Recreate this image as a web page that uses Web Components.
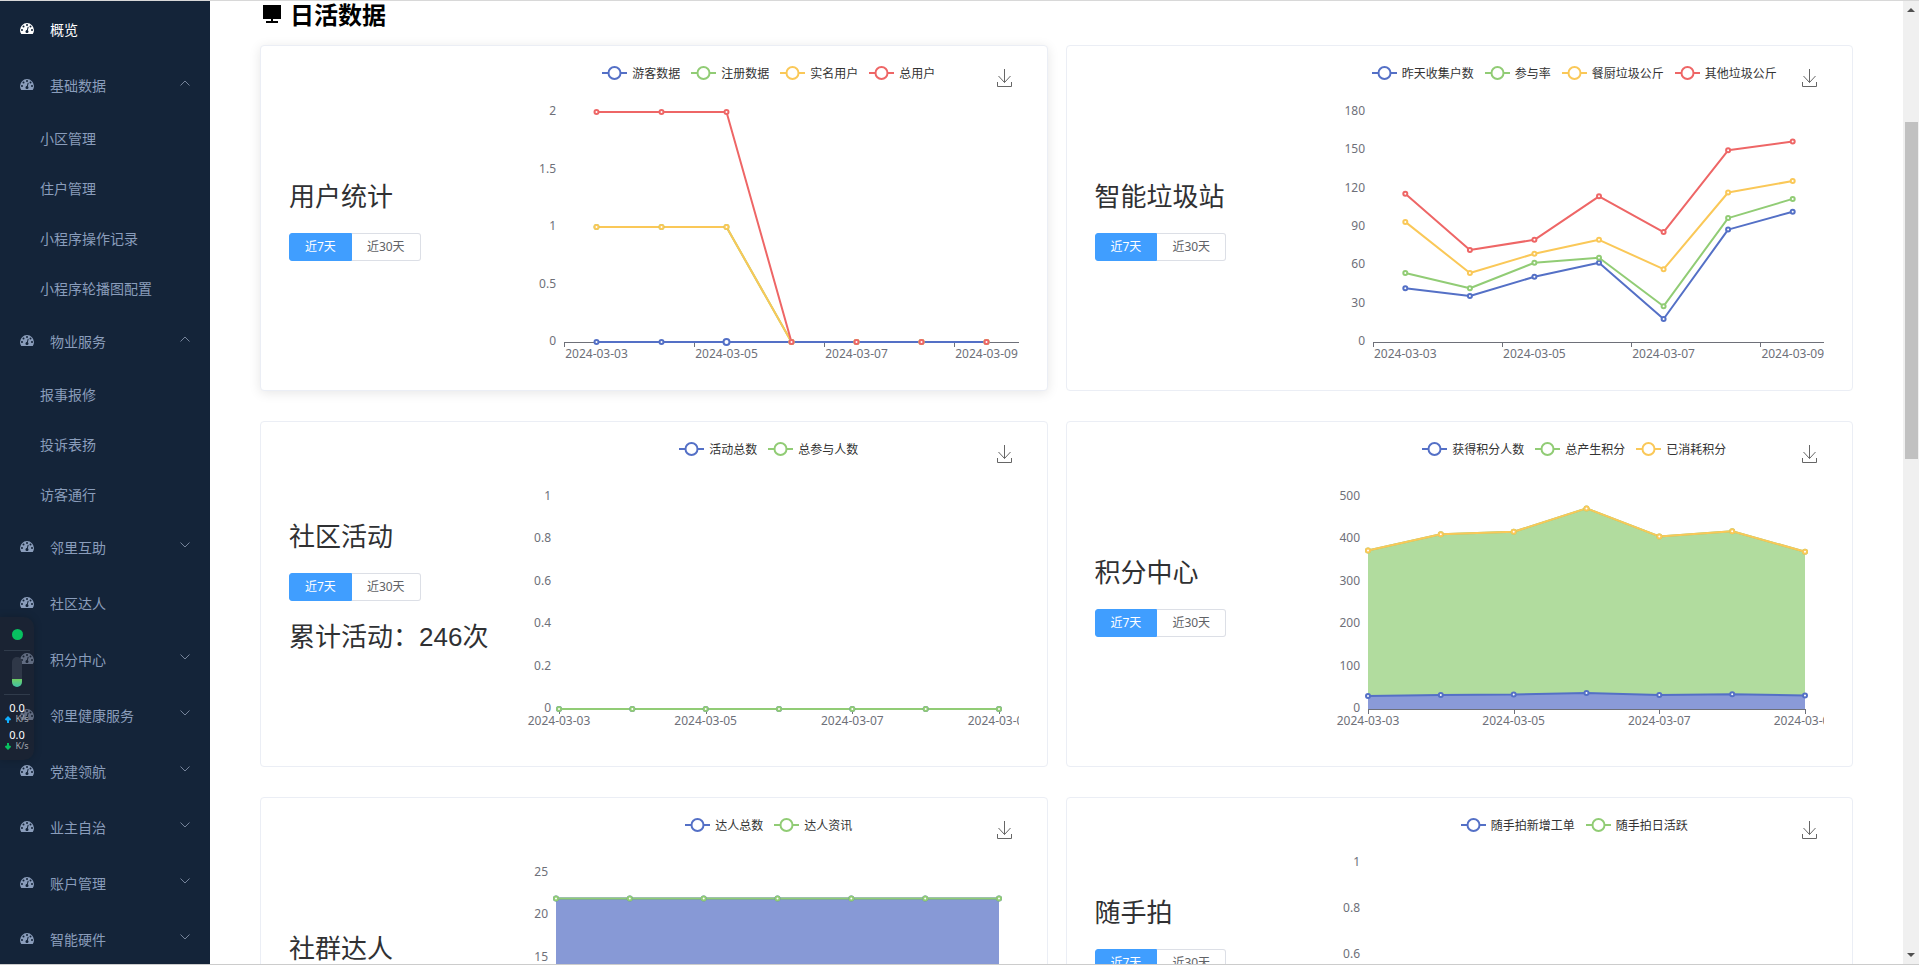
<!DOCTYPE html>
<html lang="zh-CN">
<head>
<meta charset="utf-8">
<title>概览</title>
<style>
  html, body { margin: 0; height: 100%; }
  body { background: #fff; overflow: hidden; font-family: "Noto Sans CJK SC", sans-serif; }
</style>
</head>
<body>
<admin-app></admin-app>

<script>
const define = (name, html, setup) => {
  const template = document.createElement('template');
  template.innerHTML = html;
  customElements.define(name, class extends HTMLElement {
    connectedCallback() {
      if (this.shadowRoot) return;
      this.attachShadow({ mode: 'open' }).append(template.content.cloneNode(true));
      if (setup) setup(this, this.shadowRoot);
    }
  });
};

/* ---------- icons ---------- */
define('gauge-icon', `
  <style>
    :host { display: block; width: 14px; height: 14px; }
    svg { display: block; width: 100%; height: 100%; fill: currentColor; }
  </style>
  <svg viewBox="0 0 128 128" aria-hidden="true"><g transform="translate(0 10)"><path fill-rule="evenodd" d="M128 63.6c0 12.4-3.4 23.9-10.1 34.5-.9 1.3-2.2 2-3.9 2H13.9c-1.7 0-3-.7-3.9-2C3.400 87.600 0 76.100 0 63.600a64 63.600 0 0 1 128 0z
    M9.100 63.600a9.100 9.100 0 1 0 18.300 0a9.100 9.100 0 1 0-18.300 0z
    M22.900 31.800a9.100 9.100 0 1 0 18.300 0a9.100 9.100 0 1 0-18.300 0z
    M54.900 18.200a9.100 9.100 0 1 0 18.300 0a9.100 9.100 0 1 0-18.300 0z
    M86.900 31.800a9.100 9.100 0 1 0 18.300 0a9.100 9.100 0 1 0-18.300 0z
    M100.600 63.600a9.100 9.100 0 1 0 18.300 0a9.100 9.100 0 1 0-18.300 0z
    M71.700 66l7.200-27.100c.7-2.500-.8-4.900-3.300-5.600-2.400-.6-4.900.8-5.600 3.300l-7.200 27.100c-5.700.5-10.600 4.400-12.100 10.100-1.900 7.300 2.500 14.700 9.800 16.600 7.300 1.900 14.900-2.400 16.800-9.700 1.500-5.700-.8-11.500-5.600-14.700z"/></g></svg>`);

define('chevron-icon', `
  <style>
    :host { display: block; width: 10px; height: 6px; color: #75839a; }
    svg { display: block; width: 100%; height: 100%; fill: none; stroke: currentColor; }
    :host([up]) svg { transform: scaleY(-1); }
  </style>
  <svg viewBox="0 0 10 6" aria-hidden="true"><path d="M.5.500 5 5 9.500.5"/></svg>`);

/* ---------- sidebar ---------- */
define('side-item', `
  <style>
    :host { display: block; height: 56px; color: #8a9dbb; font-size: 14px; }
    :host([active]) { color: #fff; }
    :host([sub]) { height: 50px; }
    .row { all: unset; box-sizing: border-box; display: flex; align-items: center; width: 100%; height: 100%;
           padding: 0 20px; cursor: pointer; }
    .row span { margin-left: 16px; flex: 1; white-space: nowrap; }
    :host([sub]) .row { padding-left: 40px; }
    :host([sub]) .row span { margin-left: 0; }
    chevron-icon { margin-bottom: 4px; flex: none; }
  </style>`, (host, root) => {
  const group = host.hasAttribute('group');
  const row = document.createElement(group ? 'button' : 'a');
  row.className = 'row';
  if (group) {
    row.type = 'button';
    row.setAttribute('aria-expanded', host.getAttribute('group') === 'open');
  } else row.href = '#';
  row.innerHTML = `${host.hasAttribute('sub') ? '' : '<gauge-icon></gauge-icon>'}<span><slot></slot></span>` +
    (group ? `<chevron-icon ${host.getAttribute('group') === 'open' ? 'up' : ''}></chevron-icon>` : '');
  root.append(row);
});

define('side-nav', `
  <style>
    :host { display: block; background: #142439; overflow: hidden; }
  </style>
  <nav>
    <side-item active>概览</side-item>
    <side-item group="open">基础数据</side-item>
    <side-item sub>小区管理</side-item>
    <side-item sub>住户管理</side-item>
    <side-item sub>小程序操作记录</side-item>
    <side-item sub>小程序轮播图配置</side-item>
    <side-item group="open">物业服务</side-item>
    <side-item sub>报事报修</side-item>
    <side-item sub>投诉表扬</side-item>
    <side-item sub>访客通行</side-item>
    <side-item group>邻里互助</side-item>
    <side-item>社区达人</side-item>
    <side-item group>积分中心</side-item>
    <side-item group>邻里健康服务</side-item>
    <side-item group>党建领航</side-item>
    <side-item group>业主自治</side-item>
    <side-item group>账户管理</side-item>
    <side-item group>智能硬件</side-item>
  </nav>`);

/* ---------- floating network monitor ---------- */
define('net-monitor', `
  <style>
    :host { display: flex; flex-direction: column; align-items: center; box-sizing: border-box; width: 34px; height: 143px;
            padding: 12px 4px 0; border-radius: 0 10px 10px 0; background: rgba(34, 36, 42, .4);
            box-shadow: 0 0 8px rgba(0, 0, 0, .2); color: #fff; font: 11px/14px "Noto Sans", sans-serif; }
    .dot { width: 11px; height: 11px; border-radius: 50%; background: #07c160; flex: none; }
    hr { width: 26px; height: 1px; margin: 10px 0 6px; border: 0; background: #303b4b; flex: none; }
    .tube { width: 10px; height: 30px; border-radius: 5px; flex: none;
            background: linear-gradient(#2f3848 22px, #6fce63 22px, #3fc0a8); }
    .tube + hr { margin: 7px 0 6px; }
    .rate { display: block; line-height: 14px; }
    .unit { display: flex; align-items: center; gap: 4px; font-size: 9px; line-height: 8px; margin-bottom: 5px; color: #a4a8b0; }
    svg { width: 6px; height: 7px; fill: none; stroke: currentColor; stroke-width: 2; }
    .up { color: #10aeff; } .down { color: #07c160; transform: rotate(180deg); }
  </style>
  <span class="dot"></span><hr><span class="tube"></span><hr>
  <span class="rate">0.0</span>
  <span class="unit"><svg class="up" viewBox="0 0 6 7"><path d="M3 7V1M.5 4 3 1.500 5.500 4"/></svg>K/s</span>
  <span class="rate">0.0</span>
  <span class="unit"><svg class="down" viewBox="0 0 6 7"><path d="M3 7V1M.5 4 3 1.500 5.500 4"/></svg>K/s</span>`);

/* ---------- scroll rail ---------- */
define('scroll-rail', `
  <style>
    :host { display: grid; grid-template-rows: 121fr 337fr 504fr; background: #f0f0f0; justify-items: center; }
    .thumb { width: 13px; background: #c1c1c1; }
    svg { width: 8px; height: 4px; fill: #505050; display: block; margin: 7px 0; }
    .bottom { align-self: end; }
  </style>
  <svg viewBox="0 0 8 4"><path d="M0 4 4 0l4 4z"/></svg>
  <div class="thumb"></div>
  <svg class="bottom" viewBox="0 0 8 4"><path d="M0 0h8L4 4z"/></svg>`);

/* ---------- charts ---------- */
const COLORS = ['#5470c6', '#91cc75', '#fac858', '#ee6666'];
const DATES = ['2024-03-03', '2024-03-04', '2024-03-05', '2024-03-06', '2024-03-07', '2024-03-08', '2024-03-09'];
const CHARTS = {
  users: { left: 45, right: 0, top: 51, bottom: 281, band: true, ticks: [0, 0.5, 1, 1.5, 2], front: 0, focus: [0, 2],
    series: [['游客数据', [0, 0, 0, 0, 0, 0, 0]], ['注册数据', [1, 1, 1, 0, 0, 0, 0]],
             ['实名用户', [1, 1, 1, 0, 0, 0, 0]], ['总用户', [2, 2, 2, 0, 0, 0, 0]]] },
  garbage: { left: 48, right: 0, top: 51, bottom: 281, band: true, ticks: [0, 30, 60, 90, 120, 150, 180],
    series: [['昨天收集户数', [42, 36, 51, 62, 18, 88, 102]], ['参与率', [54, 42, 62, 66, 28, 97, 112]],
             ['餐厨垃圾公斤', [94, 54, 69, 80, 57, 117, 126]], ['其他垃圾公斤', [116, 72, 80, 114, 86, 150, 157]]] },
  activity: { left: 40, right: 20, top: 60, bottom: 272, ticks: [0, 0.2, 0.4, 0.6, 0.8, 1],
    series: [['活动总数', [0, 0, 0, 0, 0, 0, 0]], ['总参与人数', [0, 0, 0, 0, 0, 0, 0]]] },
  points: { left: 43, right: 20, top: 60, bottom: 272, ticks: [0, 100, 200, 300, 400, 500], area: ['#8a9ad8', '#b1dc9e'],
    series: [['获得积分人数', [31, 33, 34, 38, 33, 35, 32]], ['总产生积分', [374, 412, 418, 473, 407, 419, 371]],
             ['已消耗积分', [374, 412, 418, 473, 407, 419, 371]]] },
  talent: { left: 37, right: 20, top: 60, bottom: 272, ticks: [0, 5, 10, 15, 20, 25], area: ['#8799d6'],
    series: [['达人总数', [22, 22, 22, 22, 22, 22, 22]], ['达人资讯', [22, 22, 22, 22, 22, 22, 22]]] },
  snap: { left: 43, right: 0, top: 50, bottom: 281, band: true, ticks: [0, 0.2, 0.4, 0.6, 0.8, 1],
    series: [['随手拍新增工单', [0, 0, 0, 0, 0, 0, 0]], ['随手拍日活跃', [0, 0, 0, 0, 0, 0, 0]]] }
};
const LEGEND_HEIGHT = 24;

function plot(c, width) {
  const x0 = c.left, x1 = width - c.right, y0 = c.bottom - LEGEND_HEIGHT, y1 = c.top - LEGEND_HEIGHT;
  const n = DATES.length, step = (x1 - x0) / (c.band ? n : n - 1);
  const X = i => x0 + step * (c.band ? i + .5 : i);
  const max = c.ticks[c.ticks.length - 1];
  const Y = v => y0 - (y0 - y1) * v / max;
  const pts = d => d.map((v, i) => `${X(i).toFixed(1)},${Y(v).toFixed(1)}`);
  const snap = v => Math.round(v) + .5;
  let out = '';
  (c.area || []).forEach((fill, s) => {
    const base = s ? pts(c.series[s - 1][1]).reverse() : [`${x1},${y0}`, `${x0},${y0}`];
    out += `<polygon fill="${fill}" points="${pts(c.series[s][1]).concat(base).join(' ')}"/>`;
  });
  out += `<path class="axis" d="M${x0} ${y0 + .5}H${x1}` +
    DATES.map((_, i) => i % 2 ? '' : `M${snap(x0 + step * i)} ${y0}v5`).join('') + '"/>';
  c.ticks.forEach(t => out += `<text text-anchor="end" x="${x0 - 8}" y="${Math.round(Y(t)) + 3}">${t}</text>`);
  DATES.forEach((d, i) => { if (i % 2 === 0) out += `<text text-anchor="middle" x="${X(i)}" y="${y0 + 16}">${d}</text>`; });
  const order = c.series.map((_, i) => i);
  if (c.front !== undefined) order.push(...order.splice(c.front, 1));
  order.forEach(s => out += `<polyline stroke="${COLORS[s]}" points="${pts(c.series[s][1]).join(' ')}"/>`);
  c.series.forEach(([, d], s) => d.forEach((v, i) => {
    const big = c.focus && c.focus[0] === s && c.focus[1] === i;
    out += `<circle stroke="${COLORS[s]}" cx="${X(i).toFixed(1)}" cy="${Y(v).toFixed(1)}" r="${big ? 3 : 2}"/>`;
  }));
  return out;
}

define('line-chart', `
  <style>
    :host { display: block; position: relative; min-width: 0; }
    .legend { display: flex; justify-content: center; gap: 11px; height: 24px; align-items: center; }
    .legend button { all: unset; display: flex; align-items: center; gap: 5px; font-size: 12px; line-height: 14px;
                     color: #333; white-space: nowrap; cursor: pointer; }
    .legend svg { width: 25px; height: 14px; fill: #fff; stroke-width: 2; }
    .save { all: unset; position: absolute; right: 7px; top: 8px; width: 15px; height: 18px; cursor: pointer; }
    .save svg { display: block; width: 15px; height: 18px; fill: none; stroke: #666; }
    .plot { display: block; width: 100%; height: 276px; overflow: hidden; }
    .plot text { fill: #6e7079; font: 12px "Noto Sans", sans-serif; }
    .plot .axis { stroke: #6e7079; fill: none; }
    .plot polyline { fill: none; stroke-width: 2; stroke-linejoin: bevel; }
    .plot circle { fill: #fff; stroke-width: 2; }
  </style>
  <div class="legend"></div>
  <svg class="plot" role="img"></svg>
  <button class="save" type="button" aria-label="保存为图片"><svg viewBox="0 0 15 18"><path d="M1.500 7 7.500 13.500 13.500 7M.5 13v4.500h14V13M7.500 13.500V0"/></svg></button>`,
(host, root) => {
  const c = CHARTS[host.getAttribute('data')];
  root.querySelector('.legend').innerHTML = c.series.map(([name], i) =>
    `<button type="button"><svg viewBox="0 0 25 14" stroke="${COLORS[i]}" aria-hidden="true"><path d="M0 7h25"/><circle cx="12.5" cy="7" r="6"/></svg>${name}</button>`).join('');
  const svg = root.querySelector('.plot');
  const draw = () => { svg.innerHTML = plot(c, host.clientWidth); };
  draw();
  new ResizeObserver(draw).observe(host);
});

define('range-switch', `
  <style>
    :host { display: flex; }
    button { box-sizing: border-box; height: 28px; padding: 0 15px; margin: 0; font: 12px/12px "Noto Sans", "Noto Sans CJK SC", sans-serif;
             border: 1px solid #dcdfe6; background: #fff; color: #606266; white-space: nowrap; cursor: pointer; }
    .on { border-color: #409eff; background: #409eff; color: #fff; border-radius: 3px 0 0 3px; }
    .off { border-left: 0; border-radius: 0 3px 3px 0; }
  </style>
  <button type="button" class="on" aria-pressed="true">近7天</button><button type="button" class="off" aria-pressed="false">近30天</button>`);

define('stat-card', `
  <style>
    :host { display: grid; grid-template-columns: 230px minmax(0, 1fr); box-sizing: border-box; padding: 15px 28px 29px;
            border: 1px solid #ebeef5; border-radius: 4px; background: #fff; color: #303133; }
    :host([raised]) { box-shadow: 0 2px 12px rgba(0, 0, 0, .1); }
    .info { align-self: center; }
    h3, p { margin: 0; height: 72px; font: 26px/72px "Liberation Sans", "Noto Sans CJK SC", sans-serif; white-space: nowrap; }
  </style>
  <div class="info"><h3><slot></slot></h3><range-switch></range-switch></div>`, (host, root) => {
  if (host.hasAttribute('total')) {
    const p = document.createElement('p');
    p.textContent = host.getAttribute('total');
    root.querySelector('.info').append(p);
  }
  const chart = document.createElement('line-chart');
  chart.setAttribute('data', host.getAttribute('chart'));
  root.append(chart);
});

define('daily-board', `
  <style>
    :host { display: block; overflow: auto; scrollbar-width: none; padding: 0 50px; box-sizing: border-box; }
    h2 { display: flex; align-items: center; gap: 9px; margin: 0 0 18px; height: 26px; padding-left: 3px;
         font-size: 24px; line-height: 26px; font-weight: 700; color: #000; }
    h2 svg { width: 18px; height: 18px; }
    .cards { display: grid; grid-template-columns: repeat(2, minmax(0, 1fr)); gap: 30px 18px; }
  </style>
  <h2><svg viewBox="0 0 18 18" aria-hidden="true"><path d="M0 0h18v14H0zM8 14h2v2h5v2H3v-2h5z"/></svg>日活数据</h2>
  <div class="cards">
    <stat-card chart="users" raised>用户统计</stat-card>
    <stat-card chart="garbage">智能垃圾站</stat-card>
    <stat-card chart="activity" total="累计活动：246次">社区活动</stat-card>
    <stat-card chart="points">积分中心</stat-card>
    <stat-card chart="talent">社群达人</stat-card>
    <stat-card chart="snap" total="">随手拍</stat-card>
  </div>`);

define('admin-app', `
  <style>
    :host { display: grid; grid-template-columns: 210px minmax(0, 1fr) 16px; grid-template-rows: minmax(0, 1fr); height: 100vh; box-sizing: border-box;
            position: relative; border-top: 1px solid #d8d8d8; border-bottom: 1px solid #ccc; }
    net-monitor { position: absolute; left: 0; top: 616px; }
  </style>
  <side-nav></side-nav>
  <daily-board></daily-board>
  <scroll-rail></scroll-rail>
  <net-monitor></net-monitor>`);
</script>
</body>
</html>
